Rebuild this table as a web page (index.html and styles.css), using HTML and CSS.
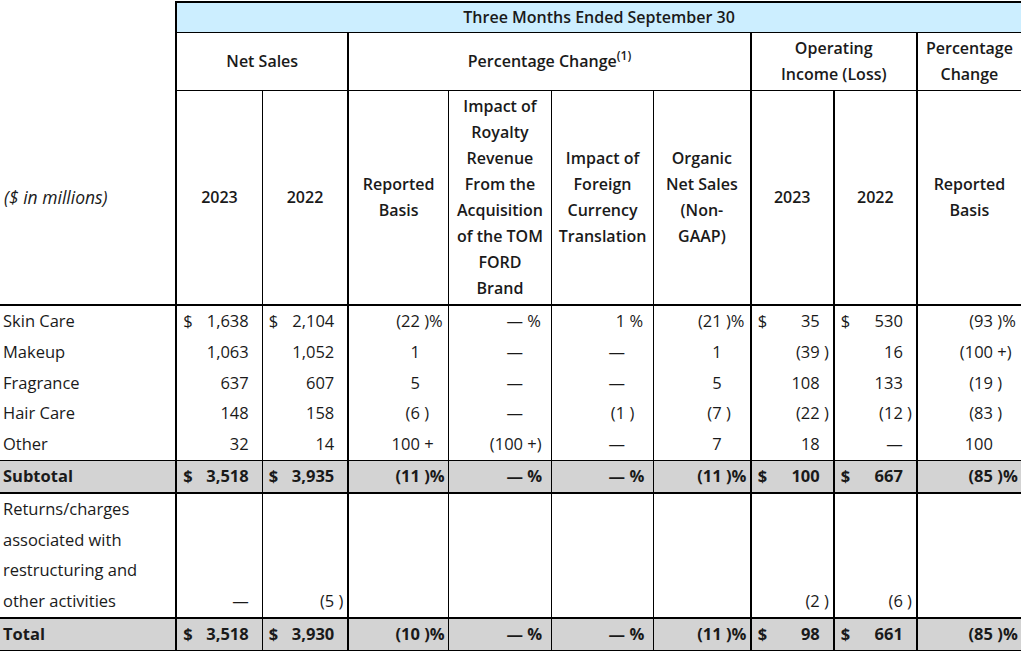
FILE: index.html
```html
<!DOCTYPE html>
<html lang="en">
<head>
<meta charset="utf-8">
<title>Three Months Ended September 30</title>
<link rel="stylesheet" href="styles.css">
</head>
<body>
<table class="fin">
  <colgroup>
    <col class="w-label">
    <col class="w-ns"><col class="w-ns">
    <col class="w-rb"><col class="w-roy"><col class="w-fx"><col class="w-org">
    <col class="w-oi"><col class="w-oi">
    <col class="w-pc">
  </colgroup>
  <thead>
    <tr class="h1">
      <th class="blank"></th>
      <th class="period" colspan="9">Three Months Ended September 30</th>
    </tr>
    <tr class="h2">
      <th class="blank"></th>
      <th class="grp" colspan="2">Net Sales</th>
      <th class="grp" colspan="4">Percentage Change<sup>(1)</sup></th>
      <th class="grp" colspan="2">Operating<br>Income (Loss)</th>
      <th class="grp">Percentage<br>Change</th>
    </tr>
    <tr class="h3">
      <th class="units">($ in millions)</th>
      <th class="thick">2023</th>
      <th class="thin">2022</th>
      <th class="thick">Reported<br>Basis</th>
      <th class="thin">Impact of<br>Royalty<br>Revenue<br>From the<br>Acquisition<br>of the TOM<br>FORD<br>Brand</th>
      <th class="thin">Impact of<br>Foreign<br>Currency<br>Translation</th>
      <th class="thin">Organic<br>Net Sales<br>(Non-<br>GAAP)</th>
      <th class="thick">2023</th>
      <th class="thick">2022</th>
      <th class="thick">Reported<br>Basis</th>
    </tr>
  </thead>
  <tbody>
    <tr>
      <td class="lbl">Skin Care</td>
      <td class="a"><div class="v"><span class="d">$</span><span class="n">1,638</span><span class="s"></span></div></td>
      <td class="a"><div class="v"><span class="d">$</span><span class="n">2,104</span><span class="s"></span></div></td>
      <td class="p"><div class="v"><span class="n">(22</span><span class="s"> )%</span></div></td>
      <td class="p"><div class="v"><span class="n">—</span><span class="s"> %</span></div></td>
      <td class="p"><div class="v"><span class="n">1</span><span class="s"> %</span></div></td>
      <td class="p"><div class="v"><span class="n">(21</span><span class="s"> )%</span></div></td>
      <td class="a"><div class="v"><span class="d">$</span><span class="n">35</span><span class="s"></span></div></td>
      <td class="a"><div class="v"><span class="d">$</span><span class="n">530</span><span class="s"></span></div></td>
      <td class="p"><div class="v"><span class="n">(93</span><span class="s"> )%</span></div></td>
    </tr>
    <tr>
      <td class="lbl">Makeup</td>
      <td class="a"><div class="v"><span class="n">1,063</span><span class="s"></span></div></td>
      <td class="a"><div class="v"><span class="n">1,052</span><span class="s"></span></div></td>
      <td class="p"><div class="v"><span class="n">1</span><span class="s"></span></div></td>
      <td class="p"><div class="v"><span class="n">—</span><span class="s"></span></div></td>
      <td class="p"><div class="v"><span class="n">—</span><span class="s"></span></div></td>
      <td class="p"><div class="v"><span class="n">1</span><span class="s"></span></div></td>
      <td class="a"><div class="v"><span class="n">(39</span><span class="s"> )</span></div></td>
      <td class="a"><div class="v"><span class="n">16</span><span class="s"></span></div></td>
      <td class="p"><div class="v"><span class="n">(100</span><span class="s"> +)</span></div></td>
    </tr>
    <tr>
      <td class="lbl">Fragrance</td>
      <td class="a"><div class="v"><span class="n">637</span><span class="s"></span></div></td>
      <td class="a"><div class="v"><span class="n">607</span><span class="s"></span></div></td>
      <td class="p"><div class="v"><span class="n">5</span><span class="s"></span></div></td>
      <td class="p"><div class="v"><span class="n">—</span><span class="s"></span></div></td>
      <td class="p"><div class="v"><span class="n">—</span><span class="s"></span></div></td>
      <td class="p"><div class="v"><span class="n">5</span><span class="s"></span></div></td>
      <td class="a"><div class="v"><span class="n">108</span><span class="s"></span></div></td>
      <td class="a"><div class="v"><span class="n">133</span><span class="s"></span></div></td>
      <td class="p"><div class="v"><span class="n">(19</span><span class="s"> )</span></div></td>
    </tr>
    <tr>
      <td class="lbl">Hair Care</td>
      <td class="a"><div class="v"><span class="n">148</span><span class="s"></span></div></td>
      <td class="a"><div class="v"><span class="n">158</span><span class="s"></span></div></td>
      <td class="p"><div class="v"><span class="n">(6</span><span class="s"> )</span></div></td>
      <td class="p"><div class="v"><span class="n">—</span><span class="s"></span></div></td>
      <td class="p"><div class="v"><span class="n">(1</span><span class="s"> )</span></div></td>
      <td class="p"><div class="v"><span class="n">(7</span><span class="s"> )</span></div></td>
      <td class="a"><div class="v"><span class="n">(22</span><span class="s"> )</span></div></td>
      <td class="a"><div class="v"><span class="n">(12</span><span class="s"> )</span></div></td>
      <td class="p"><div class="v"><span class="n">(83</span><span class="s"> )</span></div></td>
    </tr>
    <tr>
      <td class="lbl">Other</td>
      <td class="a"><div class="v"><span class="n">32</span><span class="s"></span></div></td>
      <td class="a"><div class="v"><span class="n">14</span><span class="s"></span></div></td>
      <td class="p"><div class="v"><span class="n">100</span><span class="s"> +</span></div></td>
      <td class="p"><div class="v"><span class="n">(100</span><span class="s"> +)</span></div></td>
      <td class="p"><div class="v"><span class="n">—</span><span class="s"></span></div></td>
      <td class="p"><div class="v"><span class="n">7</span><span class="s"></span></div></td>
      <td class="a"><div class="v"><span class="n">18</span><span class="s"></span></div></td>
      <td class="a"><div class="v"><span class="n">—</span><span class="s"></span></div></td>
      <td class="p"><div class="v"><span class="n">100</span><span class="s"></span></div></td>
    </tr>
    <tr class="tot subtotal">
      <td class="lbl">Subtotal</td>
      <td class="a"><div class="v"><span class="d">$</span><span class="n">3,518</span><span class="s"></span></div></td>
      <td class="a"><div class="v"><span class="d">$</span><span class="n">3,935</span><span class="s"></span></div></td>
      <td class="p"><div class="v"><span class="n">(11</span><span class="s"> )%</span></div></td>
      <td class="p"><div class="v"><span class="n">—</span><span class="s"> %</span></div></td>
      <td class="p"><div class="v"><span class="n">—</span><span class="s"> %</span></div></td>
      <td class="p"><div class="v"><span class="n">(11</span><span class="s"> )%</span></div></td>
      <td class="a"><div class="v"><span class="d">$</span><span class="n">100</span><span class="s"></span></div></td>
      <td class="a"><div class="v"><span class="d">$</span><span class="n">667</span><span class="s"></span></div></td>
      <td class="p"><div class="v"><span class="n">(85</span><span class="s"> )%</span></div></td>
    </tr>
    <tr class="multi">
      <td class="lbl">Returns/charges<br>associated with<br>restructuring and<br>other activities</td>
      <td class="a"><div class="v"><span class="n">—</span><span class="s"></span></div></td>
      <td class="a"><div class="v"><span class="n">(5</span><span class="s"> )</span></div></td>
      <td class="p"></td>
      <td class="p"></td>
      <td class="p"></td>
      <td class="p"></td>
      <td class="a"><div class="v"><span class="n">(2</span><span class="s"> )</span></div></td>
      <td class="a"><div class="v"><span class="n">(6</span><span class="s"> )</span></div></td>
      <td class="p"></td>
    </tr>
    <tr class="tot total">
      <td class="lbl">Total</td>
      <td class="a"><div class="v"><span class="d">$</span><span class="n">3,518</span><span class="s"></span></div></td>
      <td class="a"><div class="v"><span class="d">$</span><span class="n">3,930</span><span class="s"></span></div></td>
      <td class="p"><div class="v"><span class="n">(10</span><span class="s"> )%</span></div></td>
      <td class="p"><div class="v"><span class="n">—</span><span class="s"> %</span></div></td>
      <td class="p"><div class="v"><span class="n">—</span><span class="s"> %</span></div></td>
      <td class="p"><div class="v"><span class="n">(11</span><span class="s"> )%</span></div></td>
      <td class="a"><div class="v"><span class="d">$</span><span class="n">98</span><span class="s"></span></div></td>
      <td class="a"><div class="v"><span class="d">$</span><span class="n">661</span><span class="s"></span></div></td>
      <td class="p"><div class="v"><span class="n">(85</span><span class="s"> )%</span></div></td>
    </tr>
  </tbody>
</table>
</body>
</html>
```
FILE: styles.css
```css
html, body {
  margin: 0;
  padding: 0;
  background: #ffffff;
}

body {
  font-family: "Open Sans", "Noto Sans", "DejaVu Sans", sans-serif;
  font-size: 16px;
  color: #1a1a1a;
}

.fin {
  border-collapse: collapse;
  table-layout: fixed;
  width: 1021px;
  margin-top: 1px;
}

.w-label { width: 176px; }
.w-ns { width: 86px; }
.w-rb { width: 100px; }
.w-roy { width: 103px; }
.w-fx { width: 102px; }
.w-org { width: 97px; }
.w-oi { width: 83px; }
.w-pc { width: 104px; }

th {
  font-weight: 600;
  text-align: center;
  vertical-align: middle;
  line-height: 26px;
  padding: 2px 1px 3px;
}

th sup {
  font-size: 12px;
  line-height: 0;
  vertical-align: 7px;
}

.h1 th { padding: 1px 1px 2px; }

.period {
  background: #cceeff;
  border-top: 2px solid #000;
  border-left: 2px solid #000;
  border-bottom: 1px solid #000;
}

.grp {
  border-left: 2px solid #000;
  border-bottom: 1px solid #000;
}

.h3 th { border-bottom: 2px solid #000; }
.h3 th.thick { border-left: 2px solid #000; }
.h3 th.thin { border-left: 1px solid #000; }

.units {
  font-weight: 400;
  font-style: italic;
  font-size: 17.5px;
  text-align: left;
  padding-left: 4px;
}

td {
  padding: 0;
  font-size: 16.5px;
  line-height: 30.8px;
  vertical-align: middle;
  white-space: nowrap;
}

tbody td:nth-child(2),
tbody td:nth-child(4),
tbody td:nth-child(8),
tbody td:nth-child(9),
tbody td:nth-child(10) { border-left: 2px solid #000; }

tbody td:nth-child(3),
tbody td:nth-child(5),
tbody td:nth-child(6),
tbody td:nth-child(7) { border-left: 1px solid #000; }

.lbl {
  padding-left: 3px;
  text-align: left;
}

.v {
  display: flex;
  align-items: baseline;
}

.n {
  flex: 1;
  text-align: right;
}

.s {
  white-space: pre;
  text-align: left;
}

.a { padding: 0 1px 0 6px; }
.a .s { width: 12px; }

.p { padding: 0 4px 0 4px; }
.p .s { width: 24px; }

.tot td {
  background: #d3d3d3;
  font-weight: 700;
}

.subtotal td {
  border-top: 1px solid #000;
  border-bottom: 2px solid #000;
}

.total td {
  border-top: 2px solid #000;
  border-bottom: 2px solid #000;
}

.multi td { vertical-align: bottom; }
```
